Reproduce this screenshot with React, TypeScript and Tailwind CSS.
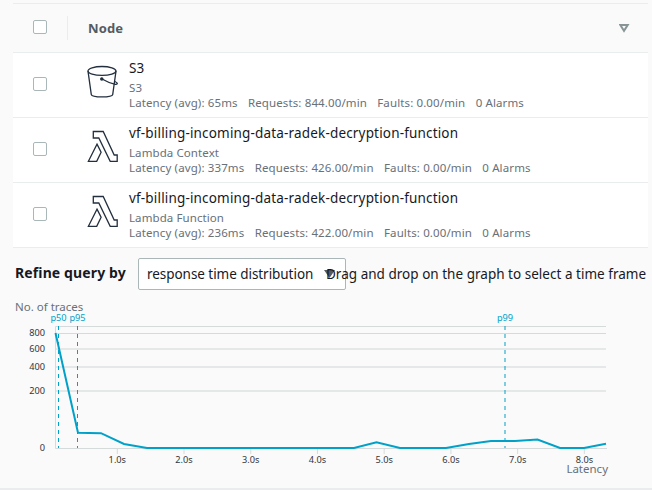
import React from "react";

type TraceNode = {
  name: string;
  kind: string;
  latency: string;
  requests: string;
  icon: "bucket" | "lambda";
};

const nodes: TraceNode[] = [
  { name: "S3", kind: "S3", latency: "65ms", requests: "844.00/min", icon: "bucket" },
  { name: "vf-billing-incoming-data-radek-decryption-function", kind: "Lambda Context", latency: "337ms", requests: "426.00/min", icon: "lambda" },
  { name: "vf-billing-incoming-data-radek-decryption-function", kind: "Lambda Function", latency: "236ms", requests: "422.00/min", icon: "lambda" },
];

function Checkbox() {
  return <span className="block size-3.5 shrink-0 rounded-[2px] border border-[#aab7b8] bg-white" />;
}

function BucketIcon() {
  return (
    <svg width="32" height="34" viewBox="0 0 32 34" fill="none" stroke="#232f3e" strokeWidth="1.3">
      <ellipse cx="15" cy="5.9" rx="14" ry="4.4" />
      <path d="M1 6.1 L4.3 29.6 C5 32.7 25 32.7 25.7 29.6 L29 6.1" />
      <path d="M15 14 C19 16.3 23 18.1 27.5 19.1 C31.5 19.9 31 17.9 27.8 16.5" />
      <circle cx="14.8" cy="13.9" r="1.1" fill="#232f3e" />
    </svg>
  );
}

function LambdaIcon() {
  return (
    <svg width="32" height="34" viewBox="0 0 32 34" fill="none" stroke="#232f3e" strokeWidth="1.3">
      <path d="M6.3 1.5 H16.2 L27.2 25 H30.2 V31.3 H23.2 L11.8 8 H6.3 Z" />
      <path d="M10 14.1 L14.1 22.2 L9.7 31.3 H1.4 Z" />
    </svg>
  );
}

function NodeRow({ node }: { node: TraceNode }) {
  return (
    <div className="flex h-[65px] border-b border-[#eaeded] bg-white">
      <div className="w-[74px] pt-6 pl-5">
        <Checkbox />
      </div>
      <div className="w-[42px] pt-3">{node.icon === "bucket" ? <BucketIcon /> : <LambdaIcon />}</div>
      <div className="whitespace-nowrap pt-1">
        <div className="text-[13.5px] leading-[22px] tracking-[0.17px] text-[#16191f]">{node.name}</div>
        <div className="pt-px text-[11.5px] leading-[15px] tracking-[0.09px] text-[#687078]">{node.kind}</div>
        <div className="flex gap-[10.3px] text-[11.5px] leading-[15px] tracking-[0.12px] text-[#687078]">
          <span>Latency (avg): {node.latency}</span>
          <span>Requests: {node.requests}</span>
          <span>Faults: 0.00/min</span>
          <span>0 Alarms</span>
        </div>
      </div>
    </div>
  );
}

const yTicks = [
  { label: "800", y: 33 },
  { label: "600", y: 49 },
  { label: "400", y: 67 },
  { label: "200", y: 91 },
  { label: "0", y: 148 },
];
const xTicks = [1, 2, 3, 4, 5, 6, 7, 8];
const markers = [
  { label: "p50", x: 58.5 },
  { label: "p95", x: 77.5 },
  { label: "p99", x: 505 },
];

function LatencyChart() {
  return (
    <svg className="block" width="652" height="188" viewBox="0 0 652 188">
      <text x="15" y="11" fontSize="11.5" fill="#687078">No. of traces</text>
      <g fill="none" stroke="#d5dbdb">
        <path d="M606 26.5 H55.5 V148.5 H607" />
        <path d="M56 33.5 H606" />
        <path d="M56 49 H606 M56 67 H606 M56 91 H606" stroke="#e5e8e8" strokeWidth="2" />
      </g>
      {yTicks.map((t) => (
        <text key={t.label} x="45" y={t.y + 3} fontSize="9.2" textAnchor="end" fill="#32363c">{t.label}</text>
      ))}
      {xTicks.map((t) => (
        <g key={t}>
          <path d={`M${50.6 + t * 66.72} 149 v5`} stroke="#d5dbdb" />
          <text x={50.6 + t * 66.72} y="163" fontSize="9.2" textAnchor="middle" fill="#32363c">{t}.0s</text>
        </g>
      ))}
      {markers.map((m) => (
        <g key={m.label}>
          <path d={`M${m.x} 26 V148`} stroke="#00a1c9" strokeDasharray="4 4" />
          <text x={m.x} y="21" fontSize="9.2" textAnchor="middle" fill="#00a1c9">{m.label}</text>
        </g>
      ))}
      <path
        d="M55.5 33 L78 132.7 L101 133.2 L124 144 L147 148 H354 L376.5 142.2 L400 148 H446 L469 144 L491 141 H515 L537.5 139.6 L560 148 H584 L606 143.8"
        fill="none" stroke="#00a1c9" strokeWidth="2"
      />
      <text x="608" y="173" fontSize="11.5" textAnchor="end" fill="#687078">Latency</text>
    </svg>
  );
}

export default function App() {
  return (
    <div className="h-[490px] w-[652px] overflow-hidden bg-[#fafafa] font-['Noto_Sans',sans-serif] text-[#16191f]">
      <div className="mr-1 ml-[13px] pt-[3px]">
        <div className="flex h-[50px] border-y border-[#eaeded]">
          <div className="w-[54px] pt-4 pl-5"><Checkbox /></div>
          <div className="mt-3 h-6 w-px bg-[#eaeded]" />
          <div className="flex-1 pt-[13px] pl-5 text-[13px] leading-[22px] font-bold tracking-[0.1px] text-[#545b64]">Node</div>
          <svg className="mt-5 mr-[18px]" width="11" height="9" viewBox="0 0 11 9" fill="none" stroke="#879596" strokeWidth="2">
            <path d="M1.3 1 H8.7 L5 6.8 Z" />
          </svg>
        </div>
        {nodes.map((n, i) => <NodeRow key={i} node={n} />)}
      </div>
      <div className="flex h-[52px] pt-[10px] pl-[15px] whitespace-nowrap">
        <div className="w-[123px] shrink-0 pt-1 text-[14px] leading-[22px] font-bold tracking-[0.12px]">Refine query by</div>
        <div className="relative h-8 w-[208px] shrink-0 rounded-[2px] border border-[#aab7b8] bg-white pt-1 pl-2 text-[13.5px] leading-[22px] tracking-[-0.05px]">
          response time distribution
          <svg className="absolute top-[11px] left-[185px]" width="11" height="8" viewBox="0 0 11 8"><path d="M0 0 H11 L5.5 8 Z" fill="#545b64" /></svg>
        </div>
        <div className="relative -ml-[20px] shrink-0 pt-[5px] text-[13.5px] leading-[22px] tracking-[0.02px]">Drag and drop on the graph to select a time frame</div>
      </div>
      <LatencyChart />
      <div className="h-0.5 bg-[#eaeded]" />
    </div>
  );
}
